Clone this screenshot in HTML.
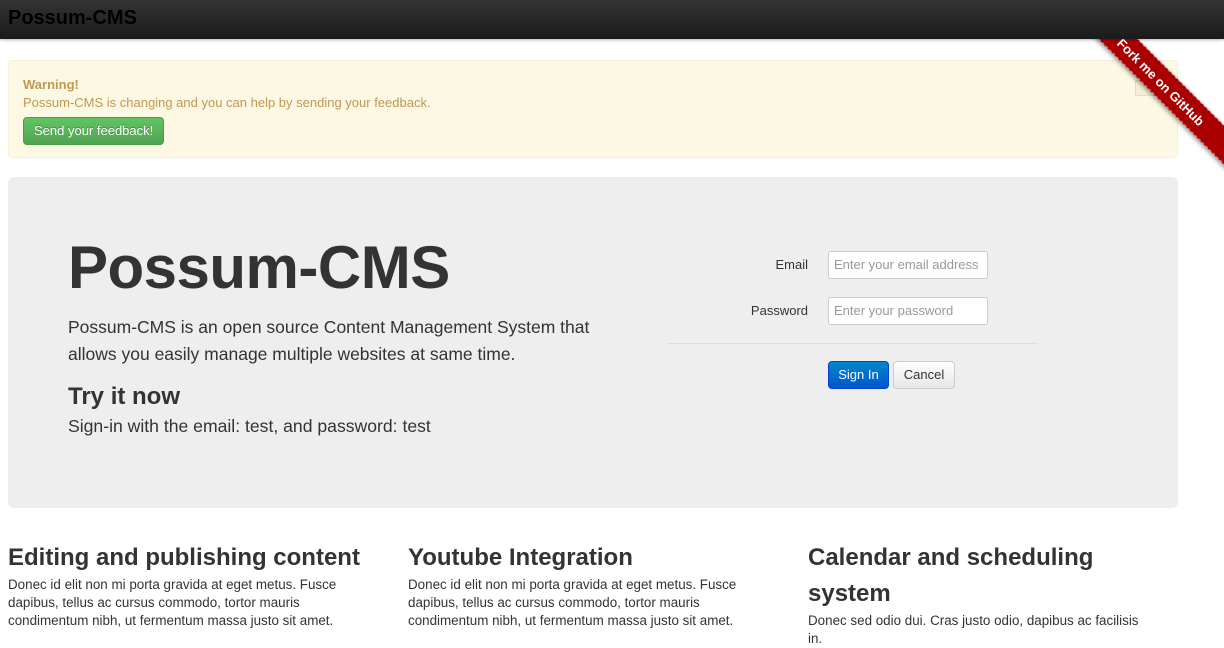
<!DOCTYPE html>
<html><head><style>
*{box-sizing:border-box}
body{margin:0;width:1224px;height:615px;overflow:hidden;background:#fff;font-family:"Liberation Sans",Helvetica,Arial,sans-serif;color:#333;position:relative}
.nav{position:absolute;z-index:5;left:0;top:0;width:1224px;height:39px;background:linear-gradient(#333,#1b1b1b);box-shadow:0 1px 3px rgba(0,0,0,.3)}
.nav span{position:absolute;left:8px;top:7px;font-size:20px;font-weight:bold;color:#000}
.alert{position:absolute;left:8px;top:60px;width:1170px;height:98px;background:#fcf8e3;border:1px solid #fbeed5;border-radius:4px;color:#c09853;padding:15px 14px;font-size:13px;line-height:18px}
.btn-g{display:inline-block;margin-top:5px;height:28px;padding:0 10px;line-height:26px;color:#fff;background:linear-gradient(#62c462,#51a351);border:1px solid #4a9a4a;border-radius:4px;font-size:13px;text-shadow:0 -1px 0 rgba(0,0,0,.25)}
.close{position:absolute;right:20px;top:19px;width:22px;height:16px;border:1px solid #e5dcc5;background:#f5eed8}
.hero{position:absolute;left:8px;top:177px;width:1170px;height:331px;background:#eee;border-radius:6px}
.hero h1{position:absolute;left:60px;top:56px;margin:0;font-size:60px;line-height:70px;font-weight:bold;letter-spacing:-.5px}
.hero p{position:absolute;left:60px;margin:0;font-size:17.5px;line-height:27px;font-weight:300}
.hero h2{position:absolute;left:60px;top:206px;margin:0;font-size:24px;font-weight:bold}
.lbl{position:absolute;font-size:13px;text-align:right;width:100px}
.inp{position:absolute;left:820px;width:160px;height:28px;background:#fff;border:1px solid #ccc;border-radius:3px;font-size:13px;color:#999;padding:5px 5px;line-height:16px;white-space:nowrap;overflow:hidden}
.hr{position:absolute;left:660px;top:166px;width:370px;border-top:1px solid #ddd}
.b{position:absolute;top:184px;height:28px;border-radius:4px;font-size:13px;line-height:26px;text-align:center}
.col{position:absolute;top:540px;width:370px}
.col h3{margin:0;font-size:24px;line-height:36px;font-weight:bold}
.col p{margin:0;font-size:13.4px;line-height:18px;width:345px}
.rib{position:absolute;z-index:4;right:-52px;top:68px;width:230px;height:28px;background:#a00;transform:rotate(45deg);color:#fff;font-size:13px;font-weight:bold;text-align:center;line-height:28px;box-shadow:0 2px 4px rgba(0,0,0,.4);border-top:1px dashed rgba(255,255,255,.5);border-bottom:1px dashed rgba(255,255,255,.5)}
</style></head><body>
<div class="nav"><span>Possum-CMS</span></div>
<div class="alert"><div class="close"></div><b>Warning!</b><br>Possum-CMS is changing and you can help by sending your feedback.<br><span class="btn-g">Send your feedback!</span></div>
<div class="hero">
<h1>Possum-CMS</h1>
<p style="top:137px">Possum-CMS is an open source Content Management System that<br>allows you easily manage multiple websites at same time.</p>
<h2>Try it now</h2>
<p style="top:236px;font-size:17.6px">Sign-in with the email: test, and password: test</p>
<div class="lbl" style="left:700px;top:80px">Email</div>
<div class="inp" style="top:74px">Enter your email address</div>
<div class="lbl" style="left:700px;top:126px">Password</div>
<div class="inp" style="top:120px">Enter your password</div>
<div class="hr"></div>
<div class="b" style="left:820px;width:61px;background:linear-gradient(#08c,#0055cc);color:#fff;border:1px solid #04c">Sign In</div>
<div class="b" style="left:885px;width:62px;background:linear-gradient(#fff,#e6e6e6);border:1px solid #ccc">Cancel</div>
</div>
<div class="col" style="left:8px"><h3>Editing and publishing content</h3><p>Donec id elit non mi porta gravida at eget metus. Fusce dapibus, tellus ac cursus commodo, tortor mauris condimentum nibh, ut fermentum massa justo sit amet.</p></div>
<div class="col" style="left:408px"><h3>Youtube Integration</h3><p>Donec id elit non mi porta gravida at eget metus. Fusce dapibus, tellus ac cursus commodo, tortor mauris condimentum nibh, ut fermentum massa justo sit amet.</p></div>
<div class="col" style="left:808px"><h3>Calendar and scheduling system</h3><p>Donec sed odio dui. Cras justo odio, dapibus ac facilisis in.</p></div>
<div class="rib">Fork me on GitHub</div>
</body></html>
